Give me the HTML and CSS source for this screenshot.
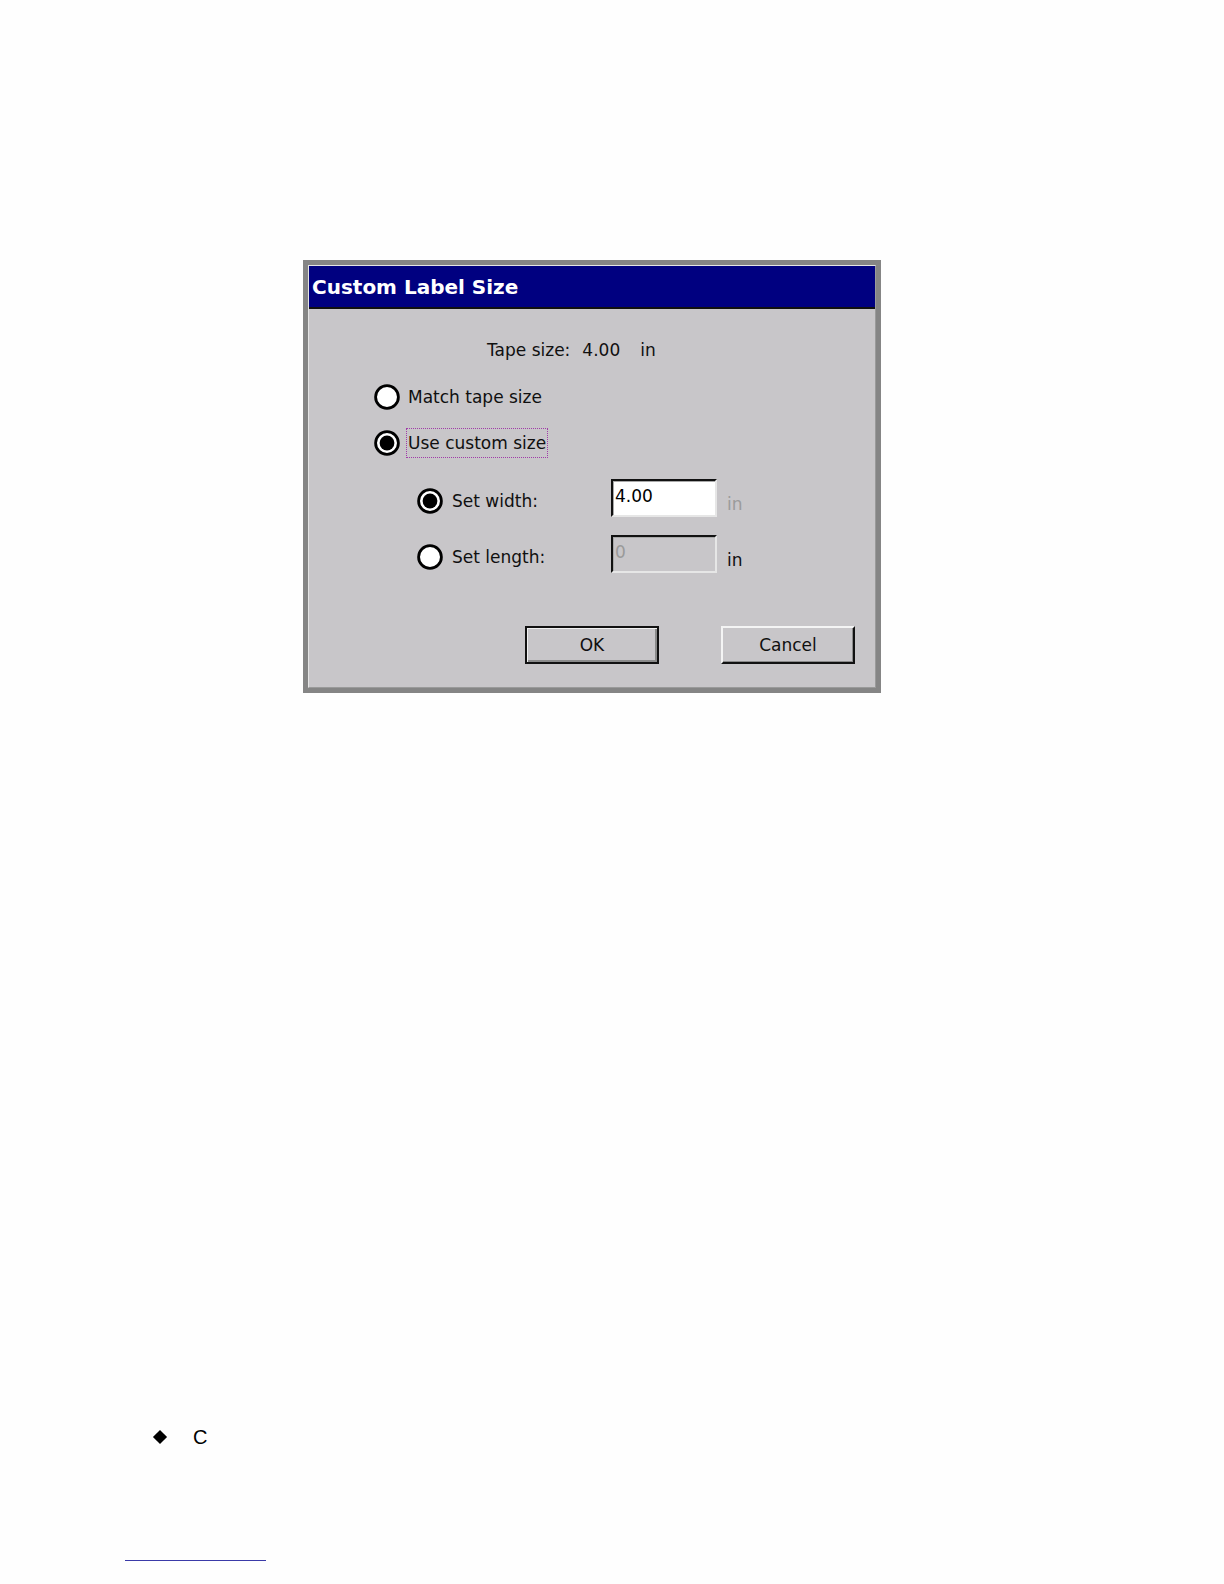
FILE: index.html
```html
<!DOCTYPE html>
<html>
<head>
<meta charset="utf-8">
<title>Custom Label Size</title>
<link rel="stylesheet" href="styles.css">
</head>
<body>
<div class="page">
  <div class="dialog">
    <div class="dialog-inner">
      <div class="titlebar">Custom Label Size</div>
      <div class="content">
        <div class="tape-row">
          <span class="tape-label">Tape size:</span>
          <span class="tape-value">4.00</span>
          <span class="tape-unit">in</span>
        </div>
        <div class="radio-row first">
          <svg class="radio" width="26" height="26" viewBox="0 0 26 26"><circle cx="13" cy="13" r="11.4" fill="#fff" stroke="#000" stroke-width="2.8"/></svg>
          <span class="label">Match tape size</span>
        </div>
        <div class="radio-row second">
          <svg class="radio" width="26" height="26" viewBox="0 0 26 26"><circle cx="13" cy="13" r="11.4" fill="#fff" stroke="#000" stroke-width="2.8"/><circle cx="13" cy="13" r="7.4" fill="#000"/></svg>
          <span class="label focus">Use custom size</span>
        </div>
        <div class="sub-row first">
          <svg class="radio" width="26" height="26" viewBox="0 0 26 26"><circle cx="13" cy="13" r="11.4" fill="#fff" stroke="#000" stroke-width="2.8"/><circle cx="13" cy="13" r="7.4" fill="#000"/></svg>
          <span class="sub-label">Set width:</span>
          <div class="field">4.00</div>
          <span class="unit disabled">in</span>
        </div>
        <div class="sub-row second">
          <svg class="radio" width="26" height="26" viewBox="0 0 26 26"><circle cx="13" cy="13" r="11.4" fill="#fff" stroke="#000" stroke-width="2.8"/></svg>
          <span class="sub-label">Set length:</span>
          <div class="field off">0</div>
          <span class="unit">in</span>
        </div>
        <div class="button-row">
          <div class="btn default">OK</div>
          <div class="btn">Cancel</div>
        </div>
      </div>
    </div>
  </div>
  <div class="bullet-row">
    <span class="diamond"></span>
    <span class="bullet-text">C</span>
  </div>
  <div class="footnote-rule"></div>
</div>
</body>
</html>
```

FILE: styles.css
```css
html, body {
  margin: 0;
  padding: 0;
  background: #fefefe;
}
.page {
  padding-top: 260px;
  padding-left: 303px;
  height: 1584px;
  box-sizing: border-box;
}
.dialog {
  width: 578px;
  height: 433px;
  box-sizing: border-box;
  border: 5px solid #858585;
  background: #c8c6c9;
}
.dialog-inner {
  height: 100%;
  box-sizing: border-box;
  border: 1px solid #e4e4e4;
  border-right-color: #9a9a9a;
  border-bottom-color: #9a9a9a;
  font-family: "DejaVu Sans", Verdana, sans-serif;
  font-size: 17px;
  color: #101010;
}
.titlebar {
  height: 41px;
  background: #000080;
  border-bottom: 2px solid #101010;
  color: #ffffff;
  font-weight: bold;
  font-size: 20px;
  line-height: 42px;
  padding-left: 3px;
}
.content {
  display: flex;
  flex-direction: column;
  padding-left: 65px;
}
.tape-row {
  margin-top: 29px;
  height: 24px;
  line-height: 24px;
  display: flex;
  padding-left: 113px;
}
.tape-value { margin-left: 12px; }
.tape-unit { margin-left: 20px; }
.radio-row {
  height: 30px;
  display: flex;
  align-items: center;
  gap: 8px;
}
.radio-row.first { margin-top: 20px; }
.radio-row.second { margin-top: 16px; }
.radio { flex: none; display: block; }
.label {
  line-height: 28px;
  height: 28px;
}
.label.focus {
  outline: 1px dotted #a03ca8;
  outline-offset: 0;
  padding: 0 1px;
  margin-left: -1px;
}
.sub-row {
  height: 38px;
  display: flex;
  align-items: center;
  padding-left: 43px;
}
.sub-row.first { margin-top: 21px; }
.sub-row.second { margin-top: 18px; }
.sub-row .radio { margin-top: 6px; }
.sub-label {
  margin-left: 9px;
  width: 159px;
  margin-top: 6px;
}
.field {
  width: 106px;
  height: 38px;
  box-sizing: border-box;
  background: #ffffff;
  border-top: 2px solid #111;
  border-left: 2px solid #111;
  border-right: 2px solid #e6e6e6;
  border-bottom: 2px solid #e6e6e6;
  box-shadow: 1px 1px 0 #a8a8a8 inset;
  padding-left: 2px;
  line-height: 30px;
  color: #000;
}
.field.off {
  background: #c8c6c9;
  color: #9a9a9a;
}
.unit {
  margin-left: 10px;
  margin-top: 12px;
}
.unit.disabled { color: #9b9b9b; }
.button-row {
  margin-top: 53px;
  display: flex;
  padding-left: 151px;
  gap: 62px;
}
.btn {
  width: 134px;
  height: 38px;
  box-sizing: border-box;
  text-align: center;
  line-height: 34px;
  border-top: 2px solid #f4f4f4;
  border-left: 2px solid #f4f4f4;
  border-right: 2px solid #111;
  border-bottom: 2px solid #111;
  box-shadow: -1px -1px 0 #8a8a8a inset;
}
.btn.default {
  border: 2px solid #111;
  box-shadow: 1px 1px 0 #f0f0f0 inset, -2px -2px 0 #8a8a8a inset;
}
.bullet-row {
  margin-top: 732px;
  margin-left: -150px;
  display: flex;
  align-items: center;
  height: 24px;
  font-family: "Liberation Sans", Arial, sans-serif;
  font-size: 20px;
  color: #000;
}
.diamond {
  width: 10px;
  height: 10px;
  background: #000;
  transform: rotate(45deg);
  margin-left: 2px;
}
.bullet-text { margin-left: 28px; }
.footnote-rule {
  margin-top: 111px;
  margin-left: -178px;
  width: 141px;
  height: 1px;
  background: #3a3aa8;
}
```
